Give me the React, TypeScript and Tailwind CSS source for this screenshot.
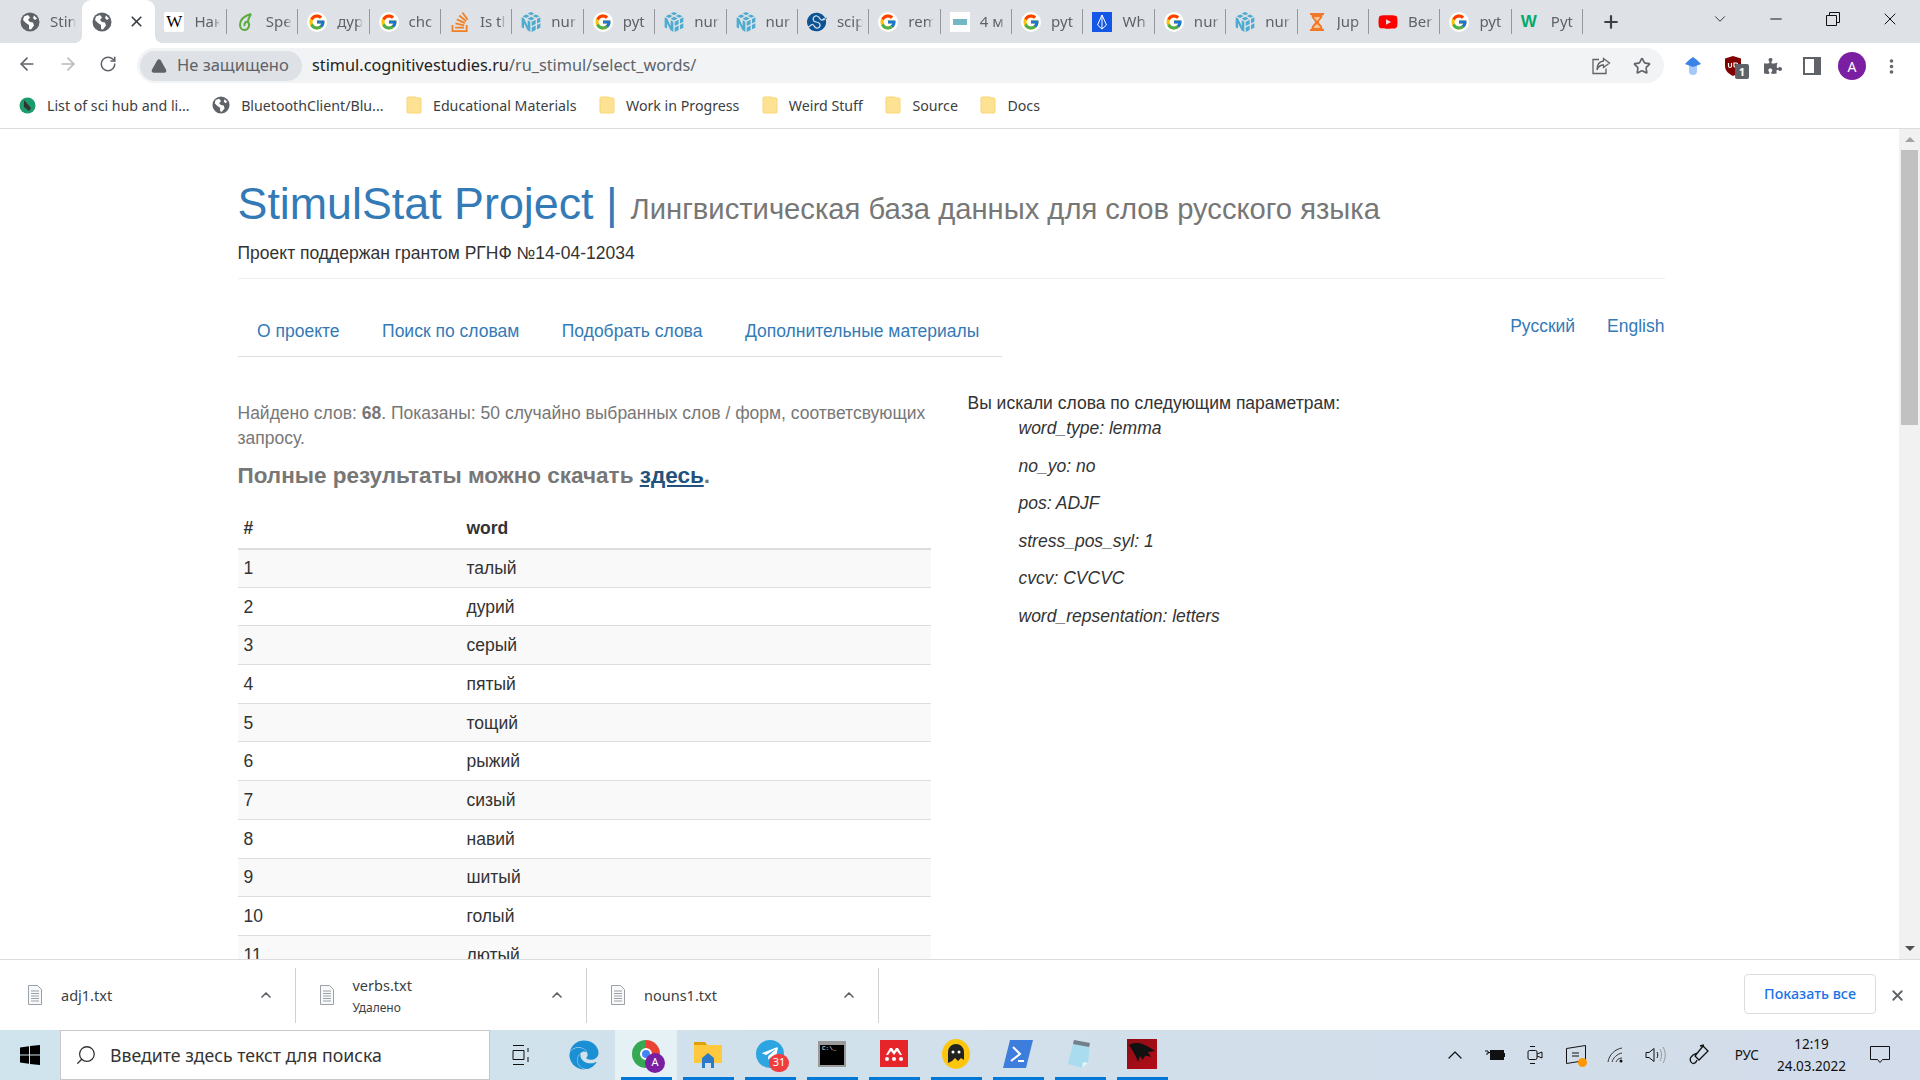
import type { ReactNode } from "react";
import {
  ArrowLeft,
  ArrowRight,
  ChevronDown,
  ChevronUp,
  EllipsisVertical,
  Minus,
  Plus,
  RotateCw,
  Search,
  Star,
  TriangleAlert,
  X,
} from "lucide-react";
import { FaEdge, FaPuzzlePiece, FaTelegramPlane, FaYoutube } from "react-icons/fa";
import { FcGoogle } from "react-icons/fc";
import { SiNumpy, SiScipy, SiStackoverflow } from "react-icons/si";

const ui = "font-['Noto_Sans','Open_Sans',sans-serif]";
const page = "font-['Liberation_Sans',Arial,sans-serif]";

function Globe({ size = 20 }: { size?: number }) {
  return (
    <svg width={size} height={size} viewBox="0 0 20 20" className="shrink-0">
      <circle cx="10" cy="10" r="9.5" fill="#5f6368" />
      <path
        d="M4 4.5 8 3l2 2.5L8 8 10 10l3 .5 1 3-3 4-2-.5V13L6 11 3 8z M14 3.5l3 3-2 1.5-2-2z"
        fill="#fff"
      />
    </svg>
  );
}

function Google() {
  return (
    <span className="flex h-[20px] w-[20px] shrink-0 items-center justify-center rounded-full bg-white">
      <FcGoogle size={18} />
    </span>
  );
}

function Numpy() {
  return <SiNumpy size={20} color="#4dabcf" className="shrink-0" />;
}

function Sprout() {
  return (
    <svg width="20" height="20" viewBox="0 0 20 20" className="shrink-0" fill="none" stroke="#5cab3d" strokeWidth="2">
      <path d="M15 2C8 4 4 8 4 13c0 3 2 5 4.500 5 4 0 6-5 3.500-8-2-1-4 1-3.500 4" />
      <path d="M15 2c-1 2-3 4-3 8" />
    </svg>
  );
}

function JupyterGlass() {
  return (
    <svg width="20" height="20" viewBox="0 0 20 20" className="shrink-0">
      <path d="M3 1h14v2h-1.500c0 4-3.500 5-3.500 7s3.500 3 3.500 7H17v2H3v-2h1.500c0-4 3.500-5 3.500-7S4.500 7 4.500 3H3z" fill="#f37726" />
      <path d="M7 5h6c-.5 2-2.500 3-3 4-.5-1-2.500-2-3-4zM6.500 16c.5-2 2.500-3 3.500-4 1 1 3 2 3.500 4z" fill="#fbc89c" />
    </svg>
  );
}

const tabs: { icon: ReactNode; title: string }[] = [
  { icon: <Globe />, title: "Stin" },
  { icon: <Globe />, title: "" },
  {
    icon: (
      <span className="flex h-[20px] w-[20px] shrink-0 items-center justify-center rounded-[2px] bg-white font-['Liberation_Serif',serif] text-[17px] text-black">
        W
      </span>
    ),
    title: "Нак",
  },
  { icon: <Sprout />, title: "Spe" },
  { icon: <Google />, title: "дур" },
  { icon: <Google />, title: "chc" },
  { icon: <SiStackoverflow size={20} color="#f48024" className="shrink-0" />, title: "Is tl" },
  { icon: <Numpy />, title: "nur" },
  { icon: <Google />, title: "pyt" },
  { icon: <Numpy />, title: "nur" },
  { icon: <Numpy />, title: "nur" },
  { icon: <SiScipy size={20} color="#0c5394" className="shrink-0" />, title: "scip" },
  { icon: <Google />, title: "rem" },
  {
    icon: (
      <span className="flex h-[20px] w-[20px] shrink-0 items-center justify-center bg-white">
        <span className="h-[6px] w-[14px] bg-[#74b7c4]" />
      </span>
    ),
    title: "4 м",
  },
  { icon: <Google />, title: "pyt" },
  {
    icon: (
      <span className="flex h-[20px] w-[20px] shrink-0 items-center justify-center bg-[#1457e6]">
        <svg width="12" height="16" viewBox="0 0 12 16" fill="none" stroke="#fff" strokeWidth="1">
          <path d="M6 1 1.500 11 6 15l4.500-4zM6 1v14" />
        </svg>
      </span>
    ),
    title: "Wh",
  },
  { icon: <Google />, title: "nur" },
  { icon: <Numpy />, title: "nur" },
  { icon: <JupyterGlass />, title: "Jup" },
  { icon: <FaYoutube size={20} color="#ff0000" className="shrink-0" />, title: "Ber" },
  { icon: <Google />, title: "pyt" },
  {
    icon: (
      <span className="w-[20px] shrink-0 font-['Liberation_Sans',sans-serif] text-[17px] leading-none font-bold text-[#04aa6d]">
        W
      </span>
    ),
    title: "Pyt",
  },
];

const words = ["талый", "дурий", "серый", "пятый", "тощий", "рыжий", "сизый", "навий", "шитый", "голый", "лютый", "сухой"];

const params = [
  "word_type: lemma",
  "no_yo: no",
  "pos: ADJF",
  "stress_pos_syl: 1",
  "cvcv: CVCVC",
  "word_repsentation: letters",
];

const navLinks = ["О проекте", "Поиск по словам", "Подобрать слова", "Дополнительные материалы"];

function TabStrip() {
  return (
    <div className={`flex h-[43px] shrink-0 items-center bg-[#dee1e6] pl-[11px] text-[15px] text-[#5f6368] ${ui}`}>
      {tabs.map((tab, i) =>
        i === 1 ? (
          <div key={i} className="relative flex h-full w-[73px] items-center rounded-t-[9px] bg-white pl-[10px] pr-[10px]">
            {tab.icon}
            <X size={17} color="#3c4043" strokeWidth={2.4} className="ml-auto" />
            <span className="absolute bottom-0 -left-2 h-2 w-2 bg-[radial-gradient(circle_at_0_0,transparent_8px,white_8px)]" />
            <span className="absolute -right-2 bottom-0 h-2 w-2 bg-[radial-gradient(circle_at_100%_0,transparent_8px,white_8px)]" />
          </div>
        ) : (
          <div key={i} className="flex h-full w-[71.4px] shrink-0 items-center pl-[9px]">
            {tab.icon}
            <span className="ml-[10px] w-[26px] whitespace-nowrap [mask-image:linear-gradient(to_right,black_75%,transparent)]">
              {tab.title}
            </span>
            {i > 1 && <span className="ml-auto h-[25px] w-px shrink-0 bg-[#94989d]" />}
          </div>
        ),
      )}
      <Plus size={20} color="#3c4043" strokeWidth={2.6} className="ml-[18px]" />
      <ChevronDown size={18} color="#222" strokeWidth={1.2} className="mb-[6px] ml-[90px]" />
      <Minus size={18} color="#111" strokeWidth={1.3} className="mb-[6px] ml-[38px]" />
      <svg width="14" height="14" viewBox="0 0 14 14" fill="none" stroke="#111" className="mb-[6px] ml-[41px]">
        <path d="M.500 3.500h10v10H.500zM3.500 3.500v-3h10v10h-3" />
      </svg>
      <X size={20} color="#111" strokeWidth={1.2} className="mb-[6px] ml-[40px]" />
    </div>
  );
}

function Toolbar() {
  return (
    <div className={`flex h-[42px] shrink-0 items-center bg-white ${ui}`}>
      <ArrowLeft size={20} color="#5f6368" className="ml-[17px]" />
      <ArrowRight size={20} color="#b6b9bd" className="ml-[21px]" />
      <RotateCw size={18} color="#5f6368" className="ml-[21px]" />
      <div className="mt-[3px] ml-[20px] flex h-[35px] w-[1527px] items-center rounded-full bg-[#f1f3f4] pl-[3px] pr-[13px]">
        <div className="flex h-[30px] w-[162px] items-center rounded-full bg-[#dee1e6] pl-[11px] text-[16.500px] text-[#5f6368]">
          <TriangleAlert size={16} fill="#5f6368" color="#5f6368" />
          <span className="ml-[10px]">Не защищено</span>
        </div>
        <span className="ml-[10px] text-[16.250px] text-[#202124]">
          stimul.cognitivestudies.ru<span className="text-[#5f6368]">/ru_stimul/select_words/</span>
        </span>
        <svg width="19" height="18" viewBox="0 0 19 18" fill="none" stroke="#5f6368" strokeWidth="1.300" className="ml-auto">
          <path d="M7 2.500H1v14h13v-5" />
          <path d="M11.500 1.500l6 4.500-6 4.500V8C8 8 6 10 5 13c0-5 2.500-8.500 6.500-9z" />
        </svg>
        <Star size={18} color="#5f6368" className="ml-[22px]" strokeWidth={2.2} />
      </div>
      <svg width="18" height="20" viewBox="0 0 18 20" className="mt-[4px] ml-[20px]">
        <path d="M5 9h8v6a4 4 0 0 1-8 0z" fill="#a6c8fa" />
        <path d="M9 1l4 3 4 4-8 3-8-3 4-4z" fill="#3b82e6" />
      </svg>
      <div className="relative mt-[4px] ml-[22px]">
        <svg width="18" height="20" viewBox="0 0 18 20">
          <path d="M9 0l8 2.500V10c0 5-4 8-8 10-4-2-8-5-8-10V2.500z" fill="#800000" />
          <path d="M4.500 7v3a1.500 1.500 0 0 0 3 0V7M10 7h2.500a1 1 0 0 1 1 1v2a1 1 0 0 1-1 1H11a1 1 0 0 1-1-1z" stroke="#fff" strokeWidth="1.200" fill="none" />
        </svg>
        <span className="absolute -right-[7px] -bottom-[3px] flex h-[15px] w-[14px] items-center justify-center rounded-[2px] bg-[#5f6368] text-[11px] leading-none font-bold text-white">
          1
        </span>
      </div>
      <FaPuzzlePiece size={18} color="#5f6368" className="mt-[4px] ml-[22px]" />
      <div className="mt-[4px] ml-[21px] h-[18px] w-[18px] border-[2.500px] border-r-[7px] border-[#5f6368] bg-white" />
      <span className="mt-[4px] ml-[17px] flex h-[28px] w-[28px] items-center justify-center rounded-full bg-[#7b1fa2] text-[14px] text-white">
        A
      </span>
      <EllipsisVertical size={19} color="#5f6368" strokeWidth={2.6} className="mt-[4px] ml-[16px]" />
    </div>
  );
}

function Folder() {
  return (
    <svg width="16" height="18" viewBox="0 0 16 18" className="shrink-0">
      <path d="M1 2a1 1 0 0 1 1-1h8l1 1h3a1 1 0 0 1 1 1v13a1 1 0 0 1-1 1H2a1 1 0 0 1-1-1z" fill="#fde293" stroke="#f7d774" />
    </svg>
  );
}

function BookmarksBar() {
  const items: { icon: ReactNode; text: string }[] = [
    {
      icon: (
        <svg width="17" height="17" viewBox="0 0 17 17" className="shrink-0">
          <circle cx="8.500" cy="8.500" r="8" fill="#1c9c6c" />
          <path d="M5 3l7 8-2 3-5-4z" fill="#333" />
        </svg>
      ),
      text: "List of sci hub and li...",
    },
    { icon: <Globe size={18} />, text: "BluetoothClient/Blu..." },
    { icon: <Folder />, text: "Educational Materials" },
    { icon: <Folder />, text: "Work in Progress" },
    { icon: <Folder />, text: "Weird Stuff" },
    { icon: <Folder />, text: "Source" },
    { icon: <Folder />, text: "Docs" },
  ];
  return (
    <div className={`flex h-[44px] shrink-0 items-center gap-[22.500px] border-b border-[#dadce0] bg-white pb-[2px] pl-[19px] text-[14.200px] text-[#3c4043] ${ui}`}>
      {items.map((item) => (
        <div key={item.text} className="flex items-center gap-[11px]">
          {item.icon}
          <span>{item.text}</span>
        </div>
      ))}
    </div>
  );
}

function Scrollbar() {
  return (
    <div className="flex w-[21px] shrink-0 flex-col items-center bg-[#f1f1f1]">
      <div className="flex h-[21px] w-full items-center justify-center">
        <span className="h-0 w-0 border-x-[5px] border-b-[5px] border-x-transparent border-b-[#a3a3a3]" />
      </div>
      <div className="h-[275px] w-[17px] bg-[#c1c1c1]" />
      <div className="mt-auto flex h-[21px] w-full items-center justify-center">
        <span className="h-0 w-0 border-x-[5px] border-t-[5px] border-x-transparent border-t-[#505050]" />
      </div>
    </div>
  );
}

function Content() {
  return (
    <div className={`min-w-0 flex-1 overflow-hidden bg-white pl-[237.500px] text-[17.500px] leading-[24px] text-[#333] ${page}`}>
      <div className="w-[1427px] pt-[48px]">
        <h1 className="flex h-[52px] items-baseline text-[44.800px] leading-[52px] text-[#337ab7]">
          StimulStat Project |
          <small className="ml-[13px] text-[29.200px] text-[#777]">Лингвистическая база данных для слов русского языка</small>
        </h1>
        <p className="mt-[12px]">Проект поддержан грантом РГНФ №14-04-12034</p>
        <hr className="mt-[13px] border-[#eee]" />
        <div className="mt-[30px] flex items-start justify-between">
          <nav className="flex h-[48px] w-[764px] items-center gap-[42.500px] border-b border-[#ddd] pb-[4px] pl-[19.500px] text-[#337ab7]">
            {navLinks.map((link) => (
              <a key={link}>{link}</a>
            ))}
          </nav>
          <div className="flex gap-[32px] pt-[5px] text-[#337ab7]">
            <a>Русский</a>
            <a>English</a>
          </div>
        </div>
        <div className="mt-[34px] flex items-start">
          <div className="w-[693px]">
            <p className="mt-[10px] leading-[25px] text-[#777]">
              Найдено слов: <b>68</b>. Показаны: 50 случайно выбранных слов / форм, соответсвующих запросу.
            </p>
            <h4 className="mt-[12px] text-[22.500px] leading-[26px] font-bold text-[#777]">
              Полные результаты можно скачать <a className="text-[#23527c] underline">здесь</a>.
            </h4>
            <table className="mt-[20px] w-full border-collapse text-left">
              <thead>
                <tr className="h-[39.500px] border-b-2 border-[#ddd]">
                  <th className="w-[229px] pl-[6px] font-bold">#</th>
                  <th className="font-bold">word</th>
                </tr>
              </thead>
              <tbody>
                {words.map((word, i) => (
                  <tr key={word} className={`h-[38.7px] border-b border-[#ddd] ${i % 2 === 0 ? "bg-[#f9f9f9]" : "bg-white"}`}>
                    <td className="pl-[6px]">{i + 1}</td>
                    <td>{word}</td>
                  </tr>
                ))}
              </tbody>
            </table>
          </div>
          <div className="ml-[37px]">
            <p className="mb-[1px]">Вы искали слова по следующим параметрам:</p>
            <ul className="pl-[51px] italic">
              {params.map((param) => (
                <li key={param} className="mb-[13.600px]">
                  {param}
                </li>
              ))}
            </ul>
          </div>
        </div>
      </div>
    </div>
  );
}

function TxtIcon() {
  return (
    <svg width="16" height="20" viewBox="0 0 16 20" fill="none" stroke="#9aa0a6" className="shrink-0">
      <path d="M1.500.500h9l4 4v15h-13z" fill="#f8f9fa" />
      <path d="M4 6h8M4 8.500h8M4 11h8M4 13.500h8M4 16h8" />
    </svg>
  );
}

function DownloadItem({ name, note }: { name: string; note?: string }) {
  return (
    <div className="flex h-[55px] w-[291.500px] shrink-0 items-center border-r border-[#cfd1d4] pl-[23px]">
      <TxtIcon />
      <div className="ml-[18px] flex flex-col">
        <span className="text-[14.500px] leading-[22px] text-[#3c4043]">{name}</span>
        {note && <span className="mt-[4px] text-[12px] leading-[16px] text-[#3c4043]">{note}</span>}
      </div>
      <ChevronUp size={16} color="#5f6368" strokeWidth={2.5} className="mr-[21px] ml-auto" />
    </div>
  );
}

function DownloadShelf() {
  return (
    <div className={`flex h-[71px] shrink-0 items-center border-t border-[#dadce0] bg-white pl-[4px] ${ui}`}>
      <DownloadItem name="adj1.txt" />
      <DownloadItem name="verbs.txt" note="Удалено" />
      <DownloadItem name="nouns1.txt" />
      <button className="mb-[3px] ml-auto flex h-[40px] w-[132px] items-center justify-center rounded-[4px] border border-[#dadce0] text-[14.300px] font-medium text-[#1a73e8]">
        Показать все
      </button>
      <X size={17} color="#5f6368" strokeWidth={2.6} className="mr-[14px] ml-[13px]" />
    </div>
  );
}

function TaskButton({ children, active, open = true }: { children: ReactNode; active?: boolean; open?: boolean }) {
  return (
    <div className={`flex h-full w-[62px] shrink-0 flex-col items-center ${active ? "bg-[#e6f1f6]" : ""}`}>
      <div className="flex flex-1 items-center justify-center">{children}</div>
      {open && <span className="h-[3px] w-[51px] bg-[#0078d7]" />}
    </div>
  );
}

function Taskbar() {
  return (
    <div className={`flex h-[50px] shrink-0 items-center bg-[linear-gradient(to_right,#cfe4ec,#d3dcea)] text-[#111] ${ui}`}>
      <div className="flex w-[60px] shrink-0 justify-center">
        <svg width="20" height="20" viewBox="0 0 20 20" fill="#000">
          <path d="M0 2.500l9-1.200V9.500H0zM10 1.100 20 0v9.500H10zM0 10.500h9v8.200l-9-1.200zM10 10.500h10V20l-10-1.100z" />
        </svg>
      </div>
      <div className="flex h-full w-[430px] shrink-0 items-center border border-[#c8c8c8] bg-white pl-[14px] text-[17.700px] text-[#333]">
        <Search size={22} strokeWidth={1.4} className="-scale-x-100" />
        <span className="ml-[13px]">Введите здесь текст для поиска</span>
      </div>
      <TaskButton open={false}>
        <svg width="20" height="22" viewBox="0 0 20 22" fill="none" stroke="#111">
          <path d="M2 1.500h11M2 20.500h11M2 6.500h11v9H2zM17 4v4M17 13v5" />
        </svg>
      </TaskButton>
      <div className="w-[1px] shrink-0" />
      <TaskButton open={false}>
        <FaEdge size={30} color="#1b8fd3" />
      </TaskButton>
      <TaskButton active>
        <div className="relative h-[28px] w-[28px] rounded-full bg-[conic-gradient(#ea4335_0_33%,#fbbc04_33%_50%,#34a853_50%_100%)]">
          <span className="absolute top-[8px] left-[8px] h-[12px] w-[12px] rounded-full border-2 border-white bg-[#4285f4]" />
          <span className="absolute -right-[5px] -bottom-[5px] flex h-[20px] w-[20px] items-center justify-center rounded-full bg-[#7b1fa2] text-[11px] text-white">
            A
          </span>
        </div>
      </TaskButton>
      <TaskButton>
        <svg width="28" height="28" viewBox="0 0 28 28">
          <path d="M0 2h11l2 3h15v18H0z" fill="#ffc83d" />
          <path d="M0 2h11l2 3H0z" fill="#e0a100" />
          <path d="M8 18l6-5 6 5v10h-3v-5h-6v5H8z" fill="#2a7ac9" />
        </svg>
      </TaskButton>
      <TaskButton>
        <div className="relative flex h-[28px] w-[28px] items-center justify-center rounded-full bg-[#2ca5e0]">
          <FaTelegramPlane size={18} color="#fff" />
          <span className="absolute -right-[5px] -bottom-[4px] flex h-[18px] w-[20px] items-center justify-center rounded-full bg-[#f03d3d] text-[11px] text-white">
            31
          </span>
        </div>
      </TaskButton>
      <TaskButton>
        <div className="h-[26px] w-[28px] border-2 border-t-[4px] border-[#9a9a9a] bg-black pl-[2px] font-['Liberation_Mono',monospace] text-[6px] leading-[8px] text-white">
          C:\_
        </div>
      </TaskButton>
      <TaskButton>
        <div className="flex h-[27px] w-[28px] items-center justify-center bg-[#e5252a]">
          <svg width="20" height="16" viewBox="0 0 20 16" fill="#fff">
            <circle cx="3" cy="13" r="2" />
            <circle cx="10" cy="13" r="2" />
            <circle cx="17" cy="13" r="2" />
            <path d="M2 9l4-7h2l2 3 2-3h2l4 7h-2l-3-4-3 4-3-4-3 4z" />
          </svg>
        </div>
      </TaskButton>
      <TaskButton>
        <svg width="28" height="30" viewBox="0 0 28 30">
          <ellipse cx="14" cy="15" rx="14" ry="15" fill="#fcc60e" />
          <path d="M6 24V13a8 8 0 0 1 16 0v8l-3-2-3 3-3-3-3 3z" fill="#222" />
          <circle cx="11" cy="13" r="1.500" fill="#fff" />
          <circle cx="17" cy="13" r="1.500" fill="#fff" />
        </svg>
      </TaskButton>
      <TaskButton>
        <svg width="30" height="28" viewBox="0 0 30 28">
          <path d="M7 0h23l-7 28H0z" fill="#3d7ddb" />
          <path d="M10 7l7 7-9 7M15 21h6" stroke="#fff" strokeWidth="2" fill="none" />
        </svg>
      </TaskButton>
      <TaskButton>
        <svg width="28" height="32" viewBox="0 0 28 32">
          <path d="M8 2l16 3-2 20-6 5-14-4z" fill="#a9dcef" />
          <path d="M8 2l16 3-1 4L7 6z" fill="#71808a" />
          <path d="M22 25l-6 5 1-6z" fill="#e8f3f7" />
        </svg>
      </TaskButton>
      <TaskButton>
        <div className="h-[30px] w-[30px] bg-[linear-gradient(135deg,#8c0d14,#b50d18)]">
          <svg width="30" height="30" viewBox="0 0 30 30">
            <path d="M2 6c8-4 14-2 26 6l-7 1 3 5c-6-2-7-1-8 3l-3-4-2 6c-2-6-5-11-9-17z" fill="#111" />
          </svg>
        </div>
      </TaskButton>
      <div className="ml-auto flex h-full items-center pr-[30px]">
        <ChevronUp size={24} strokeWidth={1.2} />
        <svg width="20" height="12" viewBox="0 0 20 12" className="ml-[18px]">
          <path d="M0 2h3v3H1M3 3.500h3" stroke="#111" fill="none" />
          <rect x="5.500" y="1.500" width="13" height="9" fill="#111" stroke="#111" />
          <rect x="18.500" y="4" width="1.500" height="4" fill="#111" />
        </svg>
        <svg width="16" height="22" viewBox="0 0 16 22" fill="none" stroke="#111" className="ml-[22px]">
          <rect x="1" y="6.500" width="9" height="9" rx="1.500" />
          <path d="M10 10l5-2v6l-5-2M3 2.500h5M3 19.500h5" />
        </svg>
        <div className="relative ml-[23px]">
          <svg width="20" height="20" viewBox="0 0 20 20" fill="none" stroke="#111">
            <path d="M.500 3.500l19-3v15l-19 3zM6 8h7M6 11h7" />
          </svg>
          <span className="absolute -right-[1px] -bottom-[2px] h-[9px] w-[9px] rounded-full bg-[#ff9800]" />
        </div>
        <svg width="18" height="16" viewBox="0 0 18 16" fill="none" stroke="#333" className="ml-[21px]">
          <path d="M1 15C2 8 8 2 15 1M5 15c1-4 5-8 10-9M9 15c.5-2 3-4 6-4" />
          <circle cx="14" cy="14" r="1.500" fill="#111" stroke="none" />
        </svg>
        <svg width="21" height="18" viewBox="0 0 21 18" fill="none" stroke="#111" className="ml-[20px]">
          <path d="M1 6.500h3l5-4v13l-5-4H1z" />
          <path d="M12 6c1 2 1 4 0 6" />
          <path d="M15 3c2 4 2 8 0 12M18 1c3 5 3 11 0 16" stroke="#999" />
        </svg>
        <svg width="22" height="22" viewBox="0 0 22 22" fill="none" stroke="#111" strokeWidth="1.300" className="ml-[23px]">
          <path d="M14 2l5 5-9 9-4-4zM8 9C2 11 0 15 2 18s5 1 6-2M11 2l4-1" />
        </svg>
        <span className="ml-[24px] text-[13.500px]">РУС</span>
        <div className="ml-[18px] flex flex-col items-center text-[13.500px] leading-[22px]">
          <span>12:19</span>
          <span>24.03.2022</span>
        </div>
        <svg width="20" height="20" viewBox="0 0 20 20" fill="none" stroke="#111" className="ml-[24px]">
          <path d="M.500 1.500h19v13h-7l-2.500 3-2.500-3h-7z" />
        </svg>
      </div>
    </div>
  );
}

export default function App() {
  return (
    <div className="flex h-screen w-screen flex-col overflow-hidden bg-white">
      <TabStrip />
      <Toolbar />
      <BookmarksBar />
      <div className="flex min-h-0 flex-1">
        <Content />
        <Scrollbar />
      </div>
      <DownloadShelf />
      <Taskbar />
    </div>
  );
}
